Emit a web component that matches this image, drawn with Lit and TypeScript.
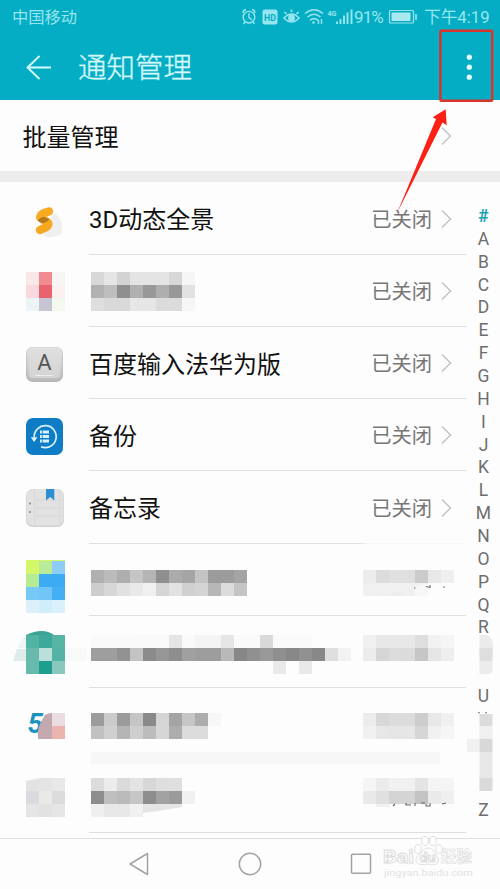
import { LitElement, html, svg, css, nothing } from "lit";
import { customElement } from "lit/decorators.js";

type Cells = string[][];
interface Block { x: number; y: number; rows: Cells }
interface Item { name?: string; icon: unknown; open?: boolean; tall?: boolean; band?: boolean; blocks?: Block[]; extra?: unknown; noLine?: boolean; shortLine?: boolean }

const CELL = 13;
const g = (s: string): string[] => s.split(" ").map((c) => (c === "-" ? "" : c.length === 2 ? "#" + c + c + c : "#" + c));
const block = (x: number, y: number, ...rows: string[]): Block => ({ x, y, rows: rows.map(g) });
const mosaic = (b: Block) =>
  b.rows.map((r, j) =>
    r.map((c, i) => (c ? svg`<rect x=${b.x + i * CELL} y=${b.y + j * CELL} width=${CELL} height=${CELL} fill=${c} />` : nothing))
  );

const panorama = svg`
  <path d="M42 52L54 31Q61 35 62 43L61.5 52Q54 56 47 55Z" fill="#efefef"/>
  <g fill="none" stroke-width="8.4" stroke-linecap="round" stroke-linejoin="round">
    <path d="M40 48L46.5 45Q49.5 42.5 47.5 40.5L42 36.5" stroke="#f6a81f"/><path d="M40.2 35.2Q40.5 33 43 31.5L49 29.4" stroke="#f8ab22"/>
  </g>
  <path d="M37.5 38.5Q39.5 36 43.5 34.8L49.5 37.2Q46.5 40.8 42.5 41.3Q39.5 40.5 37.5 38.5Z" fill="#b5781a"/>`;
const keyboard = svg`
  <defs><linearGradient id="kb" x1="0" y1="0" x2="0" y2="1"><stop offset="0" stop-color="#e5e5e5"/><stop offset="1" stop-color="#bcbcbc"/></linearGradient></defs>
  <rect x="26" y="20" width="37" height="35" rx="7" fill="#b5b5b5"/><rect x="26.5" y="20.2" width="36" height="33.5" rx="7" fill="url(#kb)"/>
  <rect x="29" y="22" width="31" height="29" rx="4" fill="#ddd" opacity=".65"/><path d="M35 48.5H53" stroke="#eee"/>
  <text x="44.5" y="43" text-anchor="middle" font-size="22" fill="#555">A</text>`;
const backup = svg`
  <rect x="26" y="19" width="37" height="37" rx="7" fill="#0e7dc6"/>
  <path d="M34.2 38 A11 11 0 1 1 41 47.8" fill="none" stroke="#d9f1ff" stroke-width="1.7"/><path d="M30.8 38.2H37.4L34.1 43Z" fill="#e6f6ff"/>
  <path d="M40 33H49M40 37.5H49M40 42H49" stroke="#d9f1ff" stroke-width="3"/><path d="M42.3 31V44" stroke="#0e7dc6" stroke-width=".8"/>`;
const memo = svg`
  <rect x="26" y="18" width="38" height="38" rx="7" fill="#cecece"/><rect x="26.5" y="18" width="37" height="36.8" rx="7" fill="#e2e2e2"/>
  <path d="M34.5 19V54M36 29H63M36 37H63M36 45H63M60 19V54" stroke="#d5d5d5" stroke-width=".8" fill="none"/>
  <path d="M46 18H54.3V29.5L50.2 26L46 29.5Z" fill="#2d8fd0"/><circle cx="30" cy="32.5" r="1" fill="#888"/><circle cx="30" cy="41" r="1" fill="#888"/>`;
const status = (y: number, ...rows: string[]) => block(363, y, ...rows);

const items: Item[] = [
  { name: "3D动态全景", icon: panorama, open: true, tall: true },
  { icon: nothing, open: true, blocks: [
    block(26, 17, "fae8e9 f28b91 f8f5f2", "f8d9df e8636d fcf0f0", "edf4f5 c7c4d3 f3f9ee"),
    block(91, 17, "d8 e5 d3 e4 e4 e4 d7 f6", "b1 be 8f b0 98 ae 98 e2", "de d9 d9 e6 e6 db db f6")] },
  { name: "百度输入法华为版", icon: keyboard, open: true },
  { name: "备份", icon: backup, open: true },
  { name: "备忘录", icon: memo, open: true, tall: true, shortLine: true },
  { icon: svg`<path d="M26 16H65V20H26Z" fill="#d4f76a"/><path d="M39 17H52V20H39Z" fill="#b8eb97"/><path d="M52 17H65V20H52Z" fill="#8bccf8"/>`, blocks: [
    block(26, 17, "d4f76a b9eb98 8dcdf8", "b5eb92 3cabf3 3cabf3", "75c9f6 70c6f7 45aff3", "dcf0f9 d0edfb daf1fc"),
    block(91, 26, "b0 bb ae c5 b5 8f ab a5 c4 9c 9c a4", "cd d7 e1 e9 f0 d5 e2 d0 d4 b7 dc c4"),
    status(26, "ed dc e0 df cb e8 ef", "f5 ee ed f0 f7 - -")],
    extra: svg`<path d="M363 52V39H428L400 48L380 51Z" fill="#f0f0f0"/><path d="M414 44h1.5M426 42.5l4 1V41M443 43h2" fill="none" stroke="#777" stroke-width="1.2"/>` },
  { icon: nothing, blocks: [
    block(26, 19, "50b3a3 3ca99b 57b3a4", "69b9ac bbdfd9 55b3a5", "66bbac 1e9e8f 88c8bf"),
    block(91, 19, "fa fa fa fa f9 f9 e5 fa f4 f4 e6 fa fa d9 fa fa fa", "9e 9e 92 c3 8b 96 8d a0 9d 9d b9 87 90 99 8f 88 91 88 df f2", "- - - - - - - - - - - - - - e9 - e9"),
    status(19, "f0 e8 e8 e8 de f2 f5", "ec d6 dc db c6 e6 ee")],
    extra: svg`<path d="M26 19Q43 11 54 19Z" fill="#3ba394"/><path d="M13 45L17 33H26V45Z" fill="#ddeeea"/><path d="M18 32Q21 23 26 20V32Z" fill="#edf5f2"/><path d="M65 32H87V45H65Z" fill="#f8faf9"/>` },
  { icon: svg`<text x="27.5" y="45" font-size="28" font-weight="700" font-style="italic" fill="#1994bf">5</text>`, tall: true, noLine: true, band: true, blocks: [
    block(52, 25, "eadde2", "ebb4b1"),
    block(91, 25, "9c cb 9b c5 89 d5 a4 c6 ad f7", "c1 d0 b5 ce bc d6 ad dc dc"),
    status(25, "ec d8 dc dc cd e8 f0", "f1 e7 e6 e6 d6 f1 f6")],
    extra: svg`<path d="M52 25V51H38Q36 40 45 27Q48 25 52 25Z" fill="#c4a8b0"/>` },
  { icon: nothing, blocks: [
    block(26, 17, "e3 e4 e8", "dadbdf e9e9e8 dc", "e5 e2 e6"),
    block(91, 17, "dc ec db e3 d8 de df", "8d bf ba c6 8d a2 9b f1", "ef e8 e8 f1 - - -"),
    status(17, "f5 eb f1 f0 e4 f4 f5", "e9 e0 d4 d4 c3 ea ef")],
    extra: svg`<path d="M143 43H182V46L155 50.5L143 52Z" fill="#e5e5e5"/><path d="M26 16V20L45 16Z" fill="#fcfcfc"/><path d="M376 43h14v3h-14z" fill="#f1f1f1"/><path d="M395 43l-2 2M406 42v2h5M415 42v3M421 42l4 0M426 43v2h4v-3M442 43l4-1" fill="none" stroke="#666" stroke-width="1.1"/>` },
];

@customElement("app-root")
export class AppRoot extends LitElement {
  static styles = css`
    :host { display: block; width: 500px; height: 889px; overflow: hidden; position: relative; background: #fdfdfd; color: #111; font-family: Roboto, "Noto Sans CJK SC", sans-serif; }
    * { box-sizing: border-box; }
    svg { display: block; overflow: visible; }
    .head { height: 100px; background: #04adc4; }
    .status { height: 35px; display: flex; align-items: center; padding: 0 11px 0 12px; color: #97e6ef; font-size: 16.3px; line-height: 35px; }
    .icons { margin-left: auto; width: 113px; height: 35px; }
    .pct { width: 33px; font-size: 17px; letter-spacing: -.9px; white-space: nowrap; }
    .battery { width: 37px; height: 35px; }
    .time { width: 65px; font-size: 16.7px; white-space: nowrap; text-align: right; }
    .bar { height: 65px; display: flex; align-items: center; padding-left: 26px; color: #dcfbfd; }
    .title { margin: 3px 0 0 26px; font-size: 28.5px; font-weight: 300; line-height: 62px; -webkit-text-stroke: .4px #c8f5f9; }
    .more { margin-left: auto; width: 61px; }
    .batch { height: 71px; display: flex; align-items: center; padding: 0 48px 0 22.5px; font-size: 24px; }
    .gap { height: 11px; background: #ededed; }
    .chev { margin-left: auto; margin-top: 1px; }
    .main { display: flex; height: 657px; border-bottom: 1px solid #dedede; }
    .list { width: 466px; }
    .row { height: 72px; position: relative; padding-left: 89px; }
    .tall { height: 73px; }
    .art { position: absolute; left: 0; top: 0; }
    .cell { height: 100%; display: flex; align-items: center; border-bottom: 1px solid #dfdfdf; font-size: 24px; padding-right: 14px; white-space: nowrap; }
    .name { margin-top: -1px; }
    .clear { border-color: transparent; }
    .short { border-image: linear-gradient(90deg, #dfdfdf 71%, #f7f7f7 74%) 1; }
    .closed { margin: -1px 9px 0 auto; color: #777; font-size: 20.3px; }
    .open .chev { margin-left: 0; }
    .index { width: 34px; padding-top: 23px; font-size: 17.5px; color: #6e6e6e; text-align: center; position: relative; }
    .letter { height: 22.87px; line-height: 22.87px; padding-left: 1px; }
    .hash { color: #18a3b4; font-weight: 700; }
    .smudge { position: absolute; left: 0; top: 0; }
    .nav { height: 50px; }
    .mark { position: absolute; left: 0; top: 0; pointer-events: none; }
  `;

  private chevron() {
    return html`<svg class="chev" width="11" height="20" viewBox="0 0 11 20"><path d="M1 1.5L9.5 10L1 18.5" fill="none" stroke="#c4c4c4" stroke-width="1.5"/></svg>`;
  }

  private row(it: Item) {
    return html`<div class="row ${it.tall ? "tall" : ""}">
      <div class="cell ${it.open ? "open" : ""} ${it.noLine ? "clear" : ""} ${it.shortLine ? "short" : ""}">
        <span class="name">${it.name ?? ""}</span>${it.open ? html`<span class="closed">已关闭</span>${this.chevron()}` : nothing}
      </div>
      <svg class="art" width="466" height="72">${it.icon}${(it.blocks ?? []).map(mosaic)}${it.extra ?? nothing}
        ${it.band ? svg`<rect x="91" y="64" width="349" height="12" fill="#f7f7f7"/>` : nothing}</svg>
    </div>`;
  }

  render() {
    const letters = [..."#ABCDEFGHIJKLMNOPQR  U    Z"];
    return html`
      <div class="head">
        <div class="status"><span>中国移动</span>
          <svg class="icons" viewBox="0 0 113 35" fill="none" stroke="#97e6ef" stroke-width="1.4">
            <circle cx="8" cy="17.2" r="5.8"/><path d="M8 13.2V17.7L11 19.7M2 13Q2 10 5 9.5M14 13Q14 10 11 9.5M4 22L2.5 24M12 22L13.5 24"/>
            <rect x="21.5" y="9.5" width="15" height="15" rx="2" fill="#97e6ef" stroke="none"/>
            <text x="29" y="20.5" text-anchor="middle" font-size="9.5" font-weight="700" fill="#04adc4" stroke="none" textLength="12" lengthAdjust="spacingAndGlyphs">HD</text>
            <path d="M43 18Q50.5 10 58 18Q50.5 26 43 18ZM45.5 14L43.5 12M50.5 12V9.5M55.5 14L57.5 12" stroke-width="1.7"/><circle cx="50.5" cy="18" r="2.7" fill="#97e6ef"/>
            <path d="M64 13.5Q73 6 82 13.5M66.5 17Q73 11.5 79.5 17M69 20.3Q73 17 77 20.3" stroke-width="1.6"/><circle cx="72.5" cy="22.5" r="1.2" fill="#97e6ef" stroke="none"/><path d="M77.5 20v4M80.5 19v5" stroke-width="1.4"/>
            <text x="86.5" y="15.5" font-size="8" font-weight="700" fill="#97e6ef" stroke="none" textLength="9" lengthAdjust="spacingAndGlyphs">4G</text>
            <path d="M96 24V21.5M99.5 24V19M103 24V15.5M106.5 24V12.5M110.5 24V9.5" stroke-width="1.9"/>
          </svg>
          <span class="pct">91%</span>
          <svg class="battery" viewBox="0 0 37 35"><rect x="2.5" y="10.5" width="24" height="12.5" rx="1" fill="none" stroke="#97e6ef" stroke-width="1.2"/><rect x="4.5" y="12.5" width="19" height="8.5" fill="#a9eaf2"/><path d="M29 14V20" stroke="#97e6ef" stroke-width="1.6"/></svg>
          <span class="time">下午4:19</span>
        </div>
        <div class="bar">
          <svg width="26" height="26" viewBox="0 0 26 26"><path d="M13.5 1L1.5 12.5L13.5 24M1.5 12.5H25" fill="none" stroke="#d6fbfd" stroke-width="1.9"/></svg>
          <h1 class="title">通知管理</h1>
          <svg class="more" height="30" viewBox="0 0 61 30" fill="#e8feff"><circle cx="30.3" cy="4.2" r="2.6"/><circle cx="30.3" cy="14.2" r="2.6"/><circle cx="30.3" cy="24.2" r="2.6"/></svg>
        </div>
      </div>
      <div class="batch"><span>批量管理</span>${this.chevron()}</div>
      <div class="gap"></div>
      <div class="main">
        <div class="list">${items.map((i) => this.row(i))}</div>
        <div class="index">
          ${letters.map((l) => html`<div class="letter ${l === "#" ? "hash" : ""}">${l}</div>`)}
          <svg class="smudge" width="34" height="657">
            <path d="M13.5 453H21Q27 455 27 464V474H13.5Z" fill="#ebebeb"/><rect x="13.5" y="466" width="13" height="13" fill="#dedede"/><path d="M13.5 479H26.5V490Q24 493 13.5 492Z" fill="#ececec"/>
            <path d="M12 530.5l2 .5M21 530.5l-2 .5" stroke="#777"/>
            <rect x="13.5" y="532" width="13" height="12" fill="#dcdcdc"/><rect x="13.5" y="544" width="13" height="13" fill="#f0f0f0"/><rect x="1" y="557" width="12.5" height="13" fill="#f1f1f1"/><rect x="13.5" y="557" width="13" height="13" fill="#d8d8d8"/><rect x="13.5" y="570" width="13" height="26" fill="#e7e7e7"/><rect x="13.5" y="596" width="13" height="13" fill="#dadada"/>
          </svg>
        </div>
      </div>
      <div class="nav"><svg width="500" height="50" fill="none" stroke="#a3a3a3" stroke-width="1.5">
        <path d="M130 25L147.5 14.5V35.5Z" stroke-linejoin="round"/><circle cx="250" cy="25" r="10.7"/><rect x="351.5" y="15.2" width="19" height="19" rx="1"/></svg></div>
      <svg class="mark" width="500" height="889">
        <g fill="#fdfdfd" stroke="#dcdcdc" stroke-width=".9">
          <text x="383" y="862.5" font-size="19" font-weight="700" textLength="31" lengthAdjust="spacingAndGlyphs">Bai</text>
          <ellipse cx="418" cy="849" rx="3.3" ry="4.5"/><ellipse cx="425" cy="841" rx="3.3" ry="4.6"/><ellipse cx="433" cy="841" rx="3.3" ry="4.6"/><ellipse cx="439" cy="849" rx="3.3" ry="4.3"/>
          <path d="M428 848Q433 848 436 855Q440 859 438 863Q435 866 428 864Q420 866 416 862Q415 857 421 853Q424 848 428 848Z"/>
          <text x="419.5" y="862" font-size="13" font-weight="700" textLength="16" lengthAdjust="spacingAndGlyphs">du</text>
          <text x="441" y="862" font-size="15.5" font-weight="700" stroke-width=".6" textLength="31" lengthAdjust="spacingAndGlyphs">经验</text>
        </g>
        <text x="384" y="875.5" font-size="9.5" fill="#e2e2e2" textLength="89" lengthAdjust="spacingAndGlyphs">jingyan.baidu.com</text>
        <rect x="440.4" y="30.8" width="51.8" height="70" rx="1" fill="none" stroke="#d9352d" stroke-width="2.5"/>
        <path d="M445.7 109.3L432.7 117.3L436 119L397.2 212.8L442.5 122.6L446.7 125.3Z" fill="#fb2115"/>
      </svg>`;
  }
}
